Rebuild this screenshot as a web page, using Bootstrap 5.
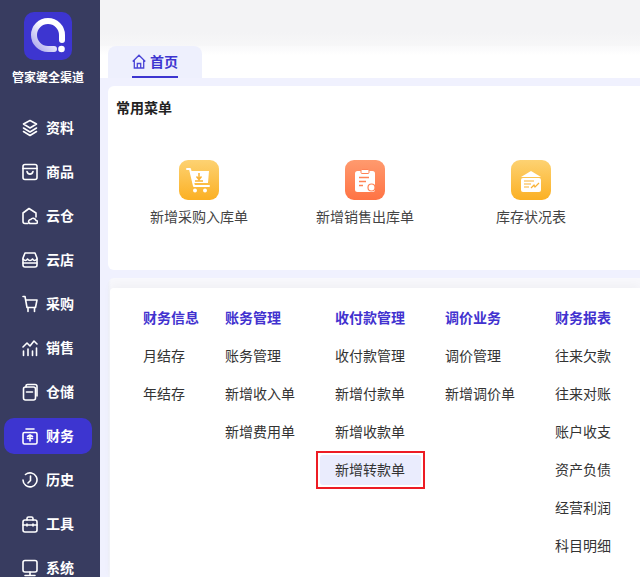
<!doctype html>
<html lang="zh"><head><meta charset="utf-8"><title>首页</title>
<link href="https://cdn.jsdelivr.net/npm/bootstrap@5.3.0/dist/css/bootstrap.min.css" rel="stylesheet">
<style>
html,body{height:577px;overflow:hidden}
body{font-family:"Liberation Sans","Noto Sans CJK SC",sans-serif;font-size:14px;color:#333;background:#f0f1fe}
.shell{width:640px;height:577px;overflow:hidden}
.side{width:100px;flex:none;background:#383c60;color:#fff;height:577px;overflow:hidden}
.logo-box{width:48px;height:48px;border-radius:10px;background:#3d35d0;margin:12px 0 0 24px}
.logo-name{font-size:12px;font-weight:700;line-height:16px;margin-top:9px;height:37px;text-align:center;padding-right:4px;padding-top:1px}
.side-row{height:44px;padding-left:22px;gap:8px;font-weight:700;font-size:14px;position:relative;line-height:20px}
.side-row.on::before{content:"";position:absolute;left:4px;top:4px;width:88px;height:36px;border-radius:10px;background:#3d35d0}
.side-row>*{position:relative}
.side-row svg{width:16px;height:18px;fill:none;stroke:#fff;stroke-width:1.6;stroke-linecap:round;stroke-linejoin:round;flex:none}
.main-col{width:540px;flex:none;overflow:hidden}
.top-strip{height:46px;background:linear-gradient(#f3f3f5 70%,#f7f7f8)}
.tab-strip{height:32px;background:linear-gradient(#f9f9fa,#fff 30%);padding-left:8px}
.home-tab{width:94px;height:32px;background:#eef0fd;border-radius:8px 8px 0 0;color:#3d35d0;font-weight:700;font-size:14px;flex-direction:column}
.tab-in{gap:4px;border-bottom:2px solid #3d35d0;width:46px;height:26px;margin-top:6px;white-space:nowrap}
.tab-in svg{width:14px;height:15px;fill:none;stroke:#4a44d6;stroke-width:1.3;margin-top:2px}
.tab-in span{line-height:20px}
.body-pane{padding:8px 0 0 8px;background:#f0f1fe}
.menu-card{height:184px;width:540px;background:#fff;border-radius:6px 0 0 6px;padding:13px 8px 0}
.menu-title{font-size:14px;font-weight:700;color:#222;line-height:18px}
.shortcuts{margin-top:43px;padding-left:33px;gap:66px}
.shortcut{width:100px;text-align:center;color:#444;line-height:20px;white-space:nowrap}
.tile{width:40px;height:40px;border-radius:9px;margin:0 auto 7px}
.tile-a{background:linear-gradient(#fdd272,#fbb024)}
.tile-b{background:linear-gradient(#ff9a6e,#ff7344)}
.tile svg{width:40px;height:40px;display:block}
.func-card{margin-top:8px;height:300px;background:linear-gradient(90deg,#eef0fa,#f8f8fc 3px);border-radius:6px 0 0 0;padding:10px 0 0 2px}
.func-in{background:#fff;height:290px;padding:20px 0 0 33px;gap:0;border-radius:4px 0 0 0;box-shadow:0 -4px 10px rgba(0,0,0,.03)}
.func-col{flex:none;width:110px}
.func-col.w82{width:82px}
.fhead{color:#4232cf;font-weight:700;font-size:14px;line-height:20px;margin-bottom:18px;white-space:nowrap}
.fitem{line-height:20px;margin-bottom:18px;color:#333;white-space:nowrap}
.pick-wrap{border:2px solid #ed1c24;width:109px;height:38px;margin:-9px 0 9px -19px;padding:2px;background:#fff}
.pick{background:#eaecfd;border-radius:3px;height:30px;line-height:30px;padding-left:15px;color:#333;white-space:nowrap}
</style></head><body>
<div class="d-flex shell">
<aside class="side">
<div class="logo-box"><svg width="48" height="48" viewBox="0 0 48 48"><defs><linearGradient id="lg" x1="0" y1="1" x2="1" y2="0"><stop offset="0" stop-color="#a9a6ec"/><stop offset=".6" stop-color="#fff"/></linearGradient></defs><path d="M38 28V23A14 14 0 1 0 24 37H30" fill="none" stroke="url(#lg)" stroke-width="6" stroke-linecap="round"/><circle cx="37.500" cy="37" r="3.300" fill="#fff"/></svg></div>
<div class="logo-name">管家婆全渠道</div>
<div class="side-row d-flex align-items-center"><svg viewBox="0 0 16 18"><path d="M8 1.500l6.500 3.500L8 9 1.500 5zM1.500 9L8 13l6.500-4M1.500 12.500L8 16.500l6.500-4"/></svg><span>资料</span></div>
<div class="side-row d-flex align-items-center"><svg viewBox="0 0 16 18"><rect x="1" y="1.500" width="14" height="15" rx="2"/><path d="M1 5.500h14M5 8.500c1 3.500 5 3.500 6 0"/></svg><span>商品</span></div>
<div class="side-row d-flex align-items-center"><svg viewBox="0 0 16 18"><path d="M6 16.500H3a2 2 0 0 1-2-2V6l6-4.500L14 6v4"/><path d="M8.500 16.500a2 2 0 0 1 .2-4 3 3 0 0 1 5.300 1 1.500 1.500 0 0 1 0 3z"/></svg><span>云仓</span></div>
<div class="side-row d-flex align-items-center"><svg viewBox="0 0 16 18"><path d="M3 2h10l2 5v7a2 2 0 0 1-2 2H3a2 2 0 0 1-2-2V7z"/><path d="M1 8c2 2 3 2 4.500 0 1.500 2 3.500 2 5 0 1.500 2 2.500 2 4.500 0M1 12h14"/></svg><span>云店</span></div>
<div class="side-row d-flex align-items-center"><svg viewBox="0 0 16 18"><path d="M1 1.500h2l2 11h8.500L15 5H4"/><path d="M6 12.500v4M12.500 12.500v4"/></svg><span>采购</span></div>
<div class="side-row d-flex align-items-center"><svg viewBox="0 0 16 18"><path d="M1 8l4-4 3 3 4-5 3 3M1.500 12v4.500M6 10v6.500M10.500 12v4.500M14.500 9v7.500"/></svg><span>销售</span></div>
<div class="side-row d-flex align-items-center"><svg viewBox="0 0 16 18"><rect x="1.500" y="4" width="12" height="13" rx="2"/><path d="M4 4V3a1.500 1.500 0 0 1 1.500-1.500H13a2 2 0 0 1 2 2V13M4.500 9h6"/></svg><span>仓储</span></div>
<div class="side-row on d-flex align-items-center"><svg viewBox="0 0 16 18"><path d="M4 2h8M2.500 5.500h11a1.500 1.500 0 0 1 1.500 1.500v8.500a1.500 1.500 0 0 1-1.500 1.500h-11A1.500 1.500 0 0 1 1 15.500V7a1.500 1.500 0 0 1 1.500-1.500zM5.500 9.500L8 8l2.500 1.500M5.500 11.500h5M8 9v5"/></svg><span>财务</span></div>
<div class="side-row d-flex align-items-center"><svg viewBox="0 0 16 18"><path d="M3.500 3.500A7 7 0 1 1 1 9M8.500 5v4.500L6 12"/></svg><span>历史</span></div>
<div class="side-row d-flex align-items-center"><svg viewBox="0 0 16 18"><path d="M5 5V3.500A1.500 1.500 0 0 1 6.500 2h3A1.500 1.500 0 0 1 11 3.500V5"/><rect x="1" y="5" width="14" height="12" rx="2"/><path d="M1 10h14M5 9v2M11 9v2"/></svg><span>工具</span></div>
<div class="side-row d-flex align-items-center"><svg viewBox="0 0 16 18"><rect x="1" y="1.500" width="14" height="11.500" rx="2"/><path d="M8 13v3.500M3 16.500h10"/></svg><span>系统</span></div>
</aside>
<div class="main-col">
<div class="top-strip"></div>
<div class="tab-strip"><div class="home-tab d-flex align-items-center"><div class="tab-in d-flex align-items-start justify-content-center"><svg viewBox="0 0 14 15"><path d="M.7 7.500L7 1.200l6.300 6.300M2.300 6.200V14h9.400V6.200M5.300 14V9.500h3.400V14"/></svg><span>首页</span></div></div></div>
<div class="body-pane">
<section class="menu-card">
<div class="menu-title">常用菜单</div>
<div class="shortcuts d-flex">
<div class="shortcut"><div class="tile tile-a"><svg viewBox="0 0 40 40"><path d="M8 9h3l4 17h15" fill="none" stroke="#fff" stroke-width="2" stroke-linecap="round" stroke-linejoin="round"/><path d="M11 11h19l-1 12H14z" fill="#fff"/><circle cx="16" cy="30.500" r="2" fill="#fff"/><circle cx="26" cy="30.500" r="2" fill="#fff"/><path d="M20 13v5M17.500 16.500l2.500 3 2.500-3M16 21h8" fill="none" stroke="#f9b233" stroke-width="1.500"/></svg></div>新增采购入库单</div>
<div class="shortcut"><div class="tile tile-b"><svg viewBox="0 0 40 40"><rect x="10" y="11" width="20" height="21" rx="2.500" fill="#fff"/><rect x="16" y="9.500" width="8" height="4" rx="1" fill="#fff" stroke="#ff8355"/><path d="M14 17.500h10M14 21.500h7M14 25.500h4" stroke="#ff8355" stroke-width="1.500"/><circle cx="26.500" cy="27.500" r="3.500" fill="#fff" stroke="#ff8355" stroke-width="1.200"/></svg></div>新增销售出库单</div>
<div class="shortcut"><div class="tile tile-a"><svg viewBox="0 0 40 40"><path d="M10 17l10-6 10 6z" fill="#fff"/><rect x="10" y="18" width="20" height="14" rx="2" fill="#fff"/><path d="M13 21h10M13 24h7M13 27h5M20 28l3-3 1 2 4-4" fill="none" stroke="#f9b233" stroke-width="1.200"/></svg></div>库存状况表</div>
</div>
</section>
<section class="func-card"><div class="func-in d-flex">
<div class="func-col w82"><div class="fhead">财务信息</div><div class="fitem">月结存</div><div class="fitem">年结存</div></div>
<div class="func-col"><div class="fhead">账务管理</div><div class="fitem">账务管理</div><div class="fitem">新增收入单</div><div class="fitem">新增费用单</div></div>
<div class="func-col"><div class="fhead">收付款管理</div><div class="fitem">收付款管理</div><div class="fitem">新增付款单</div><div class="fitem">新增收款单</div><div class="pick-wrap"><div class="pick">新增转款单</div></div></div>
<div class="func-col"><div class="fhead">调价业务</div><div class="fitem">调价管理</div><div class="fitem">新增调价单</div></div>
<div class="func-col"><div class="fhead">财务报表</div><div class="fitem">往来欠款</div><div class="fitem">往来对账</div><div class="fitem">账户收支</div><div class="fitem">资产负债</div><div class="fitem">经营利润</div><div class="fitem">科目明细</div></div>
</div></section>
</div></div></div>
</body></html>
